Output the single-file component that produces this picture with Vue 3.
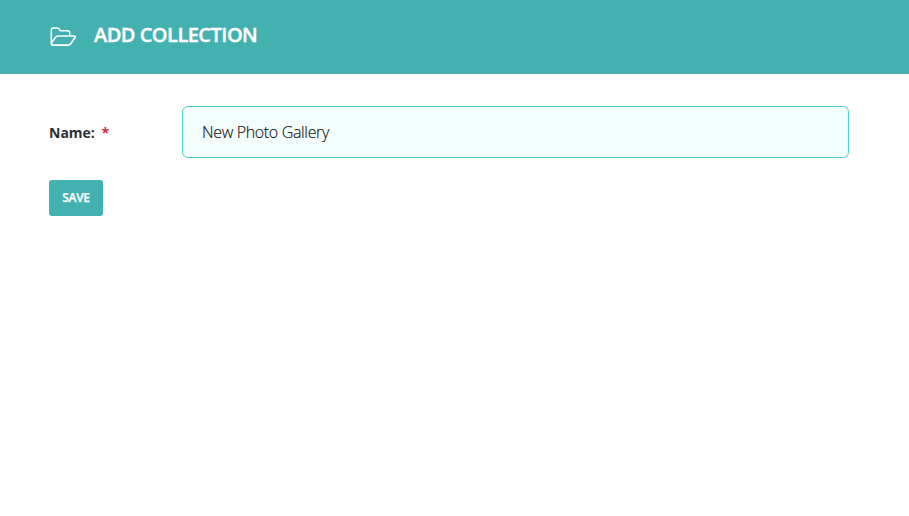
<script setup>
import { ref } from 'vue'

const name = ref('New Photo Gallery')
</script>

<template>
  <main class="page">
    <header class="header">
      <svg class="folder" viewBox="0 0 28 22" width="28" height="22" aria-hidden="true">
        <path d="M2.3 17.5V4.2Q2.3 2 4.5 2H8.4Q9.9 2 10.5 3.3L11.2 4.8H18.3Q20.7 4.8 20.7 7V10M2.3 17L6.6 11.3Q7.5 10 9 10H24.9Q27 10 26 11.5L21.9 17.5Q20.8 19.1 18.8 19.1H4.3Q2.3 19.1 2.3 17Z" />
      </svg>
      <h1 class="title">ADD COLLECTION</h1>
    </header>
    <form class="form" @submit.prevent>
      <div class="row">
        <label class="label" for="name">Name: <span class="required">*</span></label>
        <input id="name" v-model="name" class="input" type="text" />
      </div>
      <button class="save" type="submit">SAVE</button>
    </form>
  </main>
</template>

<style>
body {
  margin: 0;
  background: #fff;
}
</style>

<style scoped>
.page {
  min-height: 516px;
  background: #fff;
  font-family: "Open Sans", sans-serif;
}
.header {
  display: flex;
  box-sizing: border-box;
  height: 74px;
  padding: 21px 49px 0;
  background: #44b1b1;
  color: #fff;
}
.folder {
  flex: none;
  margin-top: 5px;
  fill: none;
  stroke: #fff;
  stroke-width: 1.6;
  stroke-linejoin: round;
}
.title {
  margin: 0 0 0 17px;
  font-size: 20px;
  font-weight: 600;
  line-height: 28px;
  letter-spacing: -0.52px;
  -webkit-text-stroke: 0.4px #fff;
}
.form {
  padding: 32px 60px 0 49px;
}
.row {
  display: grid;
  grid-template-columns: 133px 1fr;
  align-items: center;
}
.label {
  padding-top: 2px;
  color: #2d3033;
  font-size: 14px;
  font-weight: 700;
  line-height: 20px;
}
.required {
  margin-left: 3px;
  color: #c9303e;
}
.input {
  box-sizing: border-box;
  width: 100%;
  height: 52px;
  padding: 0 19px;
  border: 1px solid #51d0ca;
  border-radius: 6px;
  outline: none;
  background: #f3fdfc;
  color: #111;
  font-family: inherit;
  font-size: 16px;
  font-weight: 300;
  letter-spacing: -0.34px;
  -webkit-text-stroke: 0.15px #111;
}
.save {
  display: block;
  width: 54px;
  height: 36px;
  margin-top: 22px;
  padding: 0 0 2px;
  border: 0;
  border-radius: 3px;
  background: #44b1b1;
  color: #fff;
  font-family: inherit;
  font-size: 12px;
  font-weight: 600;
  letter-spacing: -0.3px;
  -webkit-text-stroke: 0.25px #fff;
}
</style>
